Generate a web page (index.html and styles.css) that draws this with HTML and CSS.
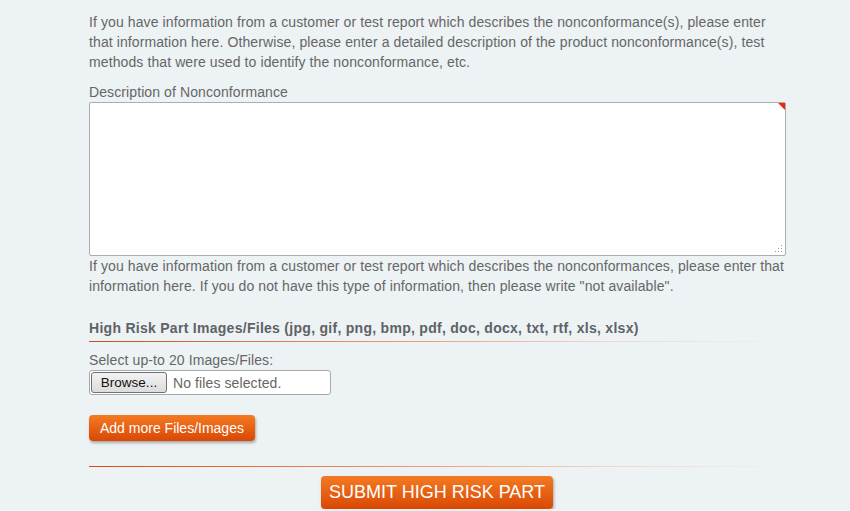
FILE: index.html
```html
<!DOCTYPE html>
<html lang="en">

<head>
    <meta charset="UTF-8">
    <meta name="viewport" content="width=device-width, initial-scale=1.0">
    <title>High Risk Part</title>

    <link rel="stylesheet" href="styles.css">

</head>

<body>

    <div class="form-wrap">

        <p class="help first">If you have information from a customer or test report which describes the nonconformance(s), please enter that information here. Otherwise, please enter a detailed description of the product nonconformance(s), test methods that were used to identify the nonconformance, etc.</p>

        <label class="field-label" for="description">Description of Nonconformance</label>
        <div class="textarea-box">
            <textarea id="description"></textarea>
            <span class="required-mark"></span>
            <svg class="grip" width="8" height="8" viewBox="0 0 8 8">
                <rect x="6" y="0" width="1" height="1" fill="#999" />
                <rect x="3" y="3" width="1" height="1" fill="#999" />
                <rect x="6" y="3" width="1" height="1" fill="#999" />
                <rect x="0" y="6" width="1" height="1" fill="#999" />
                <rect x="3" y="6" width="1" height="1" fill="#999" />
                <rect x="6" y="6" width="1" height="1" fill="#999" />
            </svg>
        </div>

        <p class="help">If you have information from a customer or test report which describes the nonconformances, please enter that information here. If you do not have this type of information, then please write "not available".</p>

        <h3 class="section-title">High Risk Part Images/Files (jpg, gif, png, bmp, pdf, doc, docx, txt, rtf, xls, xlsx)</h3>
        <div class="rule"></div>

        <p class="select-label">Select up-to 20 Images/Files:</p>
        <div class="file-input">
            <span class="browse">Browse...</span>
            <span class="file-name">No files selected.</span>
        </div>

        <button class="orange-btn add-more">Add more Files/Images</button>

        <div class="rule bottom-rule"></div>

        <div class="submit-row">
            <button class="orange-btn submit">SUBMIT HIGH RISK PART</button>
        </div>

    </div>

</body>

</html>
```

FILE: styles.css
```css
body {
    margin: 0;
    background: #edf2f5;
    font-family: "Liberation Sans", Arial, sans-serif;
    font-size: 14px;
    letter-spacing: 0.1px;
    color: #666;
}

.form-wrap {
    width: 697px;
    margin-left: 89px;
    padding-top: 12px;
}

.help {
    margin: 0;
    line-height: 20px;
}

.field-label {
    display: block;
    margin-top: 10px;
    line-height: 20px;
}

.textarea-box {
    position: relative;
    height: 154px;
}

.textarea-box textarea {
    box-sizing: border-box;
    width: 100%;
    height: 154px;
    border: 1px solid #a9aeb1;
    border-radius: 2px;
    background: #fff;
    display: block;
    margin: 0;
    resize: none;
}

.required-mark {
    position: absolute;
    top: 1px;
    right: 1px;
    width: 0;
    height: 0;
    border-top: 7px solid #f0280a;
    border-left: 7px solid transparent;
}

.grip {
    position: absolute;
    right: 3px;
    bottom: 3px;
}

.section-title {
    margin: 22px 0 0 0;
    font-size: 14px;
    font-weight: bold;
    letter-spacing: 0.28px;
    line-height: 20px;
    color: #5e6266;
}

.rule {
    height: 1px;
    margin-top: 3px;
    background: linear-gradient(to right, #c8501e 0%, #e59a78 45%, #f0d8cc 75%, rgba(237, 242, 245, 0) 100%);
}

.select-label {
    margin: 9px 0 0 0;
    line-height: 18px;
}

.file-input {
    display: flex;
    align-items: center;
    width: 242px;
    height: 25px;
    margin-top: 1px;
    border: 1px solid #a9a9a9;
    border-radius: 3px;
    background: #fff;
    box-sizing: border-box;
    padding-left: 1px;
}

.browse {
    box-sizing: border-box;
    width: 76px;
    height: 21px;
    border: 1px solid #707070;
    border-radius: 3px;
    background: linear-gradient(#f2f2f2, #dcdcdc);
    color: #111;
    font-size: 13.5px;
    letter-spacing: 0;
    line-height: 19px;
    text-align: center;
}

.file-name {
    margin-left: 6px;
    color: #666;
}

.orange-btn {
    border: none;
    border-radius: 4px;
    background: linear-gradient(#f47a22, #d94805);
    color: #fff;
    font-family: "Liberation Sans", Arial, sans-serif;
    box-shadow: 1px 2px 3px rgba(0, 0, 0, 0.3);
    cursor: pointer;
}

.add-more {
    display: block;
    margin-top: 20px;
    height: 26px;
    padding: 0 11px;
    font-size: 14px;
    letter-spacing: 0;
}

.bottom-rule {
    margin-top: 25px;
    background: linear-gradient(to right, #e0480a 0%, #ec8a60 40%, #f2d6ca 75%, rgba(237, 242, 245, 0) 100%);
}

.submit-row {
    padding-top: 9px;
    padding-left: 232px;
}

.submit {
    height: 33px;
    padding: 0 8px;
    font-size: 18px;
    letter-spacing: 0;
}
```
